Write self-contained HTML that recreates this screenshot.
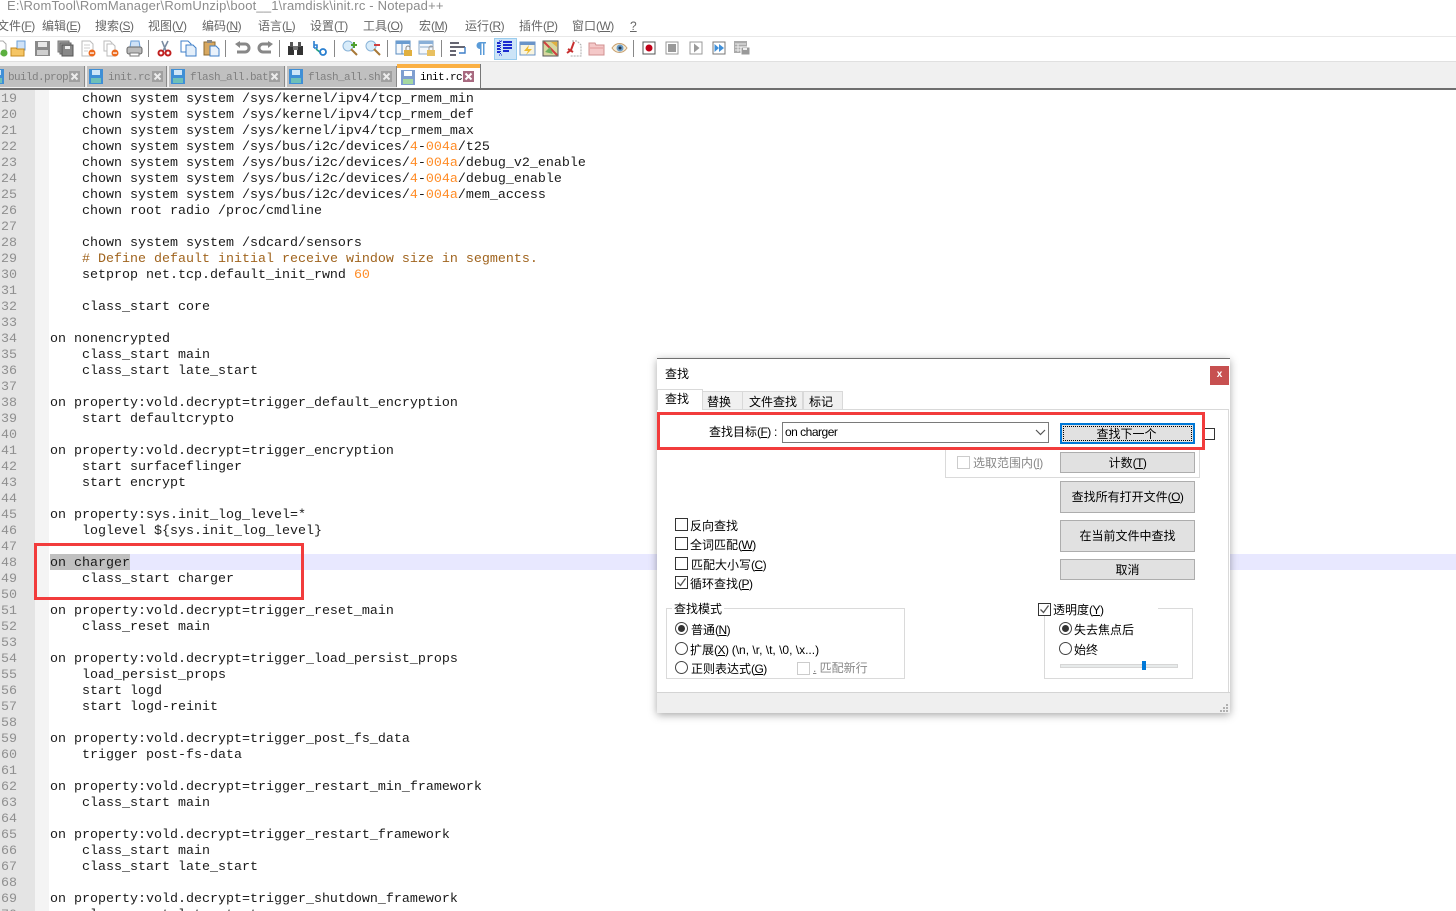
<!DOCTYPE html>
<html><head><meta charset="utf-8"><style>
html,body{margin:0;padding:0;width:1456px;height:911px;overflow:hidden;background:#fff}
body{position:relative;font:12px/16px "Liberation Sans","Noto Sans CJK SC",sans-serif;color:#000}
.a,.t{position:absolute}
.t{white-space:pre;line-height:16px}
em{font-style:normal;letter-spacing:-.55px}
u{text-decoration:underline}
pre{position:absolute;margin:0;font:13.333px/16px "Liberation Mono",monospace;white-space:pre}
#code{left:50px;top:92px;color:#1a1a1a}
#nums{left:1px;top:92px;color:#8f8f8f}
.n{color:#ff8c26}.c{color:#a0641e}
.tab{position:absolute;top:66px;height:21px;background:#c0c0c0;border-right:1px solid #8a8a8a;box-shadow:1px 0 0 #e8e8e8}
.tab b{position:absolute;top:4px;font:400 11px/16px "Liberation Mono",monospace;letter-spacing:-.6px;color:#808080}
.x{position:absolute;top:5px;width:11px;height:11px}
.sep{position:absolute;top:40px;width:1px;height:17px;background:#888}
.ic{position:absolute;top:40px;width:17px;height:17px;overflow:visible}
.btn{position:absolute;left:1060px;width:133px;background:#e1e1e1;border:1px solid #adadad;text-align:center}
.cb{position:absolute;width:11px;height:11px;border:1px solid #333;background:#fff}
.cb.dis{border-color:#ccc}
.r{position:absolute;width:11px;height:11px;border:1px solid #444;border-radius:50%;background:#fff}
.r i{position:absolute;left:2px;top:2px;width:7px;height:7px;border-radius:50%;background:#333}
.gb{position:absolute;border:1px solid #dadada;box-sizing:border-box}
.red{position:absolute;border:3px solid #f23c3c;box-sizing:border-box}
.dt{position:absolute;top:391px;height:18px;background:#f0f0f0;border:1px solid #d9d9d9;border-bottom:0;box-sizing:border-box;line-height:20px}
</style></head><body>
<svg width="0" height="0" style="position:absolute"><defs>
<symbol id="disk" viewBox="0 0 14 15"><rect width="14" height="15" fill="#3f8fd6"/><rect x="3" y="1" width="8" height="5" fill="#cfe6f8"/><rect x="2" y="9" width="10" height="5" fill="#6fc0b8"/></symbol>
<symbol id="diskg" viewBox="0 0 14 15"><rect width="14" height="15" fill="#7f9fd0"/><rect x="3" y="1" width="8" height="5" fill="#fff"/><rect x="2" y="9" width="10" height="5" fill="#a6d8a0"/></symbol>
<symbol id="cl" viewBox="0 0 11 11"><rect width="11" height="11" fill="#a0a0a0"/><path d="M2.500 2.500l6 6M8.500 2.500l-6 6" stroke="#ececec" stroke-width="2"/></symbol>
</defs></svg>

<!-- title -->
<div class="t" style="left:7px;top:-2px;color:#8c8c8c;font-size:13px;letter-spacing:.19px">E:\RomTool\RomManager\RomUnzip\boot__1\ramdisk\init.rc - Notepad++</div>
<div class="a" style="left:0;top:15px;width:1456px;height:21px;background:#fff;border-bottom:1px solid #e8e8e8"></div>
<!-- menu -->
<div style="color:#666">
<span class="t" style="left:-3px;top:18px">文件<em>(<u>F</u>)</em></span>
<span class="t" style="left:42px;top:18px">编辑<em>(<u>E</u>)</em></span>
<span class="t" style="left:95px;top:18px">搜索<em>(<u>S</u>)</em></span>
<span class="t" style="left:148px;top:18px">视图<em>(<u>V</u>)</em></span>
<span class="t" style="left:202px;top:18px">编码<em>(<u>N</u>)</em></span>
<span class="t" style="left:258px;top:18px">语言<em>(<u>L</u>)</em></span>
<span class="t" style="left:310px;top:18px">设置<em>(<u>T</u>)</em></span>
<span class="t" style="left:363px;top:18px">工具<em>(<u>O</u>)</em></span>
<span class="t" style="left:419px;top:18px">宏<em>(<u>M</u>)</em></span>
<span class="t" style="left:465px;top:18px">运行<em>(<u>R</u>)</em></span>
<span class="t" style="left:519px;top:18px">插件<em>(<u>P</u>)</em></span>
<span class="t" style="left:572px;top:18px">窗口<em>(<u>W</u>)</em></span>
<span class="t" style="left:630px;top:18px"><u>?</u></span>
</div>

<!-- toolbar -->
<div class="a" style="left:0;top:61px;width:1456px;height:27px;background:#f0f0f0;border-top:1px solid #e0e0e0"></div>
<div class="a" style="left:494px;top:38px;width:21px;height:20px;background:#cce4f7;border:1px solid #99ccee"></div>
<div class="sep" style="left:148px"></div><div class="sep" style="left:225px"></div><div class="sep" style="left:279px"></div><div class="sep" style="left:334px"></div><div class="sep" style="left:387px"></div><div class="sep" style="left:441px"></div><div class="sep" style="left:633px"></div>

<svg class="ic" style="left:-8px" viewBox="0 0 17 17"><path d="M3 1h8l3 3v10H3z" fill="#fff" stroke="#aaa"/><circle cx="12" cy="13" r="3.500" fill="#5cb040"/></svg>
<svg class="ic" style="left:10px" viewBox="0 0 17 17"><path d="M7 1h8v9H7z" fill="#cfe2f7" stroke="#6a9fd8"/><path d="M1 8h5l1 1h7v7H1z" fill="#f5c565" stroke="#c58a20"/></svg>
<svg class="ic" style="left:34px" viewBox="0 0 17 17"><rect x="1" y="1" width="15" height="15" fill="#8a8a8a"/><rect x="4" y="2" width="9" height="5" fill="#e8e8e8"/><rect x="3" y="10" width="11" height="5" fill="#cfcfcf"/></svg>
<svg class="ic" style="left:57px" viewBox="0 0 17 17"><rect x="1" y="1" width="11" height="11" fill="#aaa" stroke="#777"/><rect x="3" y="3" width="11" height="11" fill="#999" stroke="#666"/><rect x="5" y="5" width="11" height="11" fill="#888" stroke="#555"/><rect x="8" y="6" width="5" height="3" fill="#eee"/></svg>
<svg class="ic" style="left:80px" viewBox="0 0 17 17"><path d="M2 1h8l3 3v12H2z" fill="#fff" stroke="#bbb"/><path d="M4 5h6M4 8h6M4 11h4" stroke="#ccc"/><circle cx="12" cy="13" r="3.500" fill="#ec6a1e"/><rect x="10" y="12.400" width="4" height="1.300" fill="#fff"/></svg>
<svg class="ic" style="left:103px" viewBox="0 0 17 17"><path d="M1 1h6l2 2v8H1z" fill="#fff" stroke="#bbb"/><path d="M4 4h6l2 2v10H4z" fill="#fff" stroke="#bbb"/><circle cx="12" cy="13" r="3.500" fill="#ec6a1e"/><rect x="10" y="12.400" width="4" height="1.300" fill="#fff"/></svg>
<svg class="ic" style="left:126px" viewBox="0 0 17 17"><path d="M5 1h8l1 6H4z" fill="#cfe2f7" stroke="#6a9fd8"/><rect x="1" y="7" width="15" height="7" rx="2" fill="#bbb" stroke="#666"/><rect x="4" y="13" width="9" height="3" fill="#fff" stroke="#777"/></svg>
<svg class="ic" style="left:156px" viewBox="0 0 17 17"><path d="M12 1L7 11M6 1l4 10" stroke="#7a8aa0" stroke-width="1.600"/><circle cx="5" cy="13" r="2.500" fill="none" stroke="#c02020" stroke-width="2"/><circle cx="12" cy="13" r="2.500" fill="none" stroke="#c02020" stroke-width="2"/></svg>
<svg class="ic" style="left:180px" viewBox="0 0 17 17"><path d="M1 1h7l3 3v8H1z" fill="#fff" stroke="#3f7fc8"/><path d="M6 5h7l3 3v8H6z" fill="#e4effa" stroke="#3f7fc8"/></svg>
<svg class="ic" style="left:203px" viewBox="0 0 17 17"><rect x="1" y="2" width="11" height="13" fill="#d8a860" stroke="#8c6a30"/><rect x="4" y="0" width="5" height="3" fill="#888"/><path d="M7 6h6l3 3v7H7z" fill="#eaf2fb" stroke="#3f7fc8"/></svg>
<svg class="ic" style="left:234px" viewBox="0 0 17 17"><path d="M4 4h7a3.500 3.500 0 010 8H3" fill="none" stroke="#888" stroke-width="3"/><path d="M1 4l5-3v7z" fill="#888"/></svg>
<svg class="ic" style="left:257px" viewBox="0 0 17 17"><path d="M13 4H6a3.500 3.500 0 000 8h8" fill="none" stroke="#888" stroke-width="3"/><path d="M16 4l-5-3v7z" fill="#888"/></svg>
<svg class="ic" style="left:287px" viewBox="0 0 17 17"><rect x="1" y="6" width="6" height="9" fill="#333"/><rect x="10" y="6" width="6" height="9" fill="#333"/><rect x="3" y="2" width="3" height="5" fill="#555"/><rect x="11" y="2" width="3" height="5" fill="#555"/><rect x="6" y="6" width="5" height="4" fill="#777"/></svg>
<svg class="ic" style="left:311px" viewBox="0 0 17 17"><path d="M3 1v7M3 5h3v3H3" fill="none" stroke="#2a7fd0" stroke-width="1.600"/><path d="M5 9l5 4" stroke="#20a080" stroke-width="1.600"/><circle cx="12" cy="12" r="3" fill="none" stroke="#2a7fd0" stroke-width="1.800"/></svg>
<svg class="ic" style="left:342px" viewBox="0 0 17 17"><circle cx="6" cy="6" r="5" fill="#d8ecfa" stroke="#8ab4d8"/><path d="M9 9l6 6" stroke="#a87838" stroke-width="2"/><path d="M9 5h6M12 2v6" stroke="#50a030" stroke-width="2"/></svg>
<svg class="ic" style="left:365px" viewBox="0 0 17 17"><circle cx="6" cy="6" r="5" fill="#d8ecfa" stroke="#8ab4d8"/><path d="M9 9l6 6" stroke="#a87838" stroke-width="2"/><path d="M9 5h6" stroke="#d04040" stroke-width="2"/></svg>
<svg class="ic" style="left:396px" viewBox="0 0 17 17"><rect x="0" y="1" width="14" height="13" fill="#f4f8fc" stroke="#5a8cc0"/><rect x="0" y="1" width="14" height="3" fill="#6a9cd0"/><path d="M6 4v10" stroke="#5a8cc0"/><rect x="8" y="10" width="8" height="6" fill="#e0b040"/><path d="M10 10V8a2 2 0 014 0v2" fill="none" stroke="#888"/></svg>
<svg class="ic" style="left:419px" viewBox="0 0 17 17"><rect x="0" y="1" width="14" height="13" fill="#f4f8fc" stroke="#8aa8c8"/><rect x="0" y="1" width="14" height="3" fill="#8ab0d8"/><path d="M1 7h12" stroke="#8aa8c8"/><rect x="8" y="10" width="8" height="6" fill="#e8c060"/><path d="M10 10V8a2 2 0 014 0v2" fill="none" stroke="#999"/></svg>
<svg class="ic" style="left:450px" viewBox="0 0 17 17"><path d="M0 3h9M0 7h15M0 11h6M0 15h6" stroke="#334" stroke-width="1.400"/><path d="M15 7v6H9" fill="none" stroke="#3f7fc8" stroke-width="1.400"/></svg>
<svg class="ic" style="left:472px" viewBox="0 0 17 17"><path d="M7 2h7v1.500h-1.500V15H11V3.500H9.500V15H8V9a3.500 3.500 0 010-7z" fill="#5a9bd8"/></svg>
<svg class="ic" style="left:496px" viewBox="0 0 17 17"><path d="M3 1h3M3 15h3M4.500 1v14" stroke="#1a2ad0" stroke-dasharray="1 1"/><path d="M7 2h9M7 5h9M7 8h9M7 11h6M1 3h3M1 6h3M1 9h3M1 12h3" stroke="#1a2ad0" stroke-width="2"/></svg>
<svg class="ic" style="left:519px" viewBox="0 0 17 17"><rect x="1" y="2" width="15" height="13" fill="#f8f4e0" stroke="#6a94c8"/><rect x="1" y="2" width="15" height="3" fill="#6a94c8"/><path d="M10 5L5 11h4l-2 4 6-6H9z" fill="#eebb30"/></svg>
<svg class="ic" style="left:542px" viewBox="0 0 17 17"><rect x="1" y="1" width="15" height="15" fill="#d8d8a0" stroke="#555"/><path d="M2 2l13 13" stroke="#d04040" stroke-width="2"/><path d="M3 12l5-5 3 7z" fill="#70b060"/><path d="M9 2h6v5z" fill="#e0b040"/></svg>
<svg class="ic" style="left:565px" viewBox="0 0 17 17"><path d="M7 1h5l4 4v11H5" fill="#fff" stroke="#aaa" stroke-dasharray="2 1"/><path d="M9 2L6 10l-4 3M3 9l5 3" fill="none" stroke="#c83030" stroke-width="2"/></svg>
<svg class="ic" style="left:588px" viewBox="0 0 17 17"><path d="M1 3h6l1 2h8v10H1z" fill="#f4c8c8" stroke="#d09090"/><path d="M2 8h13" stroke="#e09898"/></svg>
<svg class="ic" style="left:611px" viewBox="0 0 17 17"><path d="M1 8c4-6 11-6 15 0-4 6-11 6-15 0z" fill="#f4ecd8" stroke="#c8a070"/><circle cx="9" cy="8" r="3.500" fill="#6a9cc8"/><circle cx="9" cy="8" r="1.500" fill="#234"/></svg>
<svg class="ic" style="left:641px" viewBox="0 0 17 17"><rect x="2" y="2" width="12" height="12" fill="#fff" stroke="#555"/><circle cx="8" cy="8" r="3.500" fill="#c00018"/></svg>
<svg class="ic" style="left:664px" viewBox="0 0 17 17"><rect x="2" y="2" width="12" height="12" fill="#fff" stroke="#999"/><rect x="4" y="4" width="8" height="8" fill="#999"/></svg>
<svg class="ic" style="left:688px" viewBox="0 0 17 17"><rect x="2" y="2" width="12" height="12" fill="#fff" stroke="#999"/><path d="M6 3.500L11.500 8 6 12.500z" fill="#999"/></svg>
<svg class="ic" style="left:711px" viewBox="0 0 17 17"><rect x="2" y="2" width="12" height="12" fill="#fff" stroke="#777"/><path d="M3.500 4L8 8l-4.500 4zM8 4l5 4-5 4z" fill="#3f8fd8"/></svg>
<svg class="ic" style="left:734px" viewBox="0 0 17 17"><rect x="0" y="1" width="13" height="12" fill="#aaa"/><path d="M1 4h11M1 7h6M1 10h6M4 4v8" stroke="#eee"/><rect x="7" y="7" width="9" height="8" fill="#999" stroke="#fff"/><rect x="9" y="8" width="4" height="2" fill="#eee"/></svg>

<!-- tabs -->
<div class="tab" style="left:-4px;width:88px"><svg style="position:absolute;left:-6px;top:3px" width="14" height="15"><use href="#disk"/></svg><b style="left:12px">build.prop</b><svg class="x" style="left:73px"><use href="#cl"/></svg></div>
<div class="tab" style="left:87px;width:79px"><svg style="position:absolute;left:2px;top:3px" width="14" height="15"><use href="#disk"/></svg><b style="left:21px">init.rc</b><svg class="x" style="left:65px"><use href="#cl"/></svg></div>
<div class="tab" style="left:169px;width:115px"><svg style="position:absolute;left:2px;top:3px" width="14" height="15"><use href="#disk"/></svg><b style="left:21px">flash_all.bat</b><svg class="x" style="left:100px"><use href="#cl"/></svg></div>
<div class="tab" style="left:287px;width:109px"><svg style="position:absolute;left:2px;top:3px" width="14" height="15"><use href="#disk"/></svg><b style="left:21px">flash_all.sh</b><svg class="x" style="left:94px"><use href="#cl"/></svg></div>
<div class="a" style="left:397px;top:64px;width:83px;height:24px;background:#fff;border-right:1px solid #777"><div class="a" style="left:0;top:0;width:83px;height:4px;background:#fab044"></div><svg style="position:absolute;left:4px;top:6px" width="14" height="15"><use href="#diskg"/></svg><b style="position:absolute;left:23px;top:6px;font:400 11px/16px 'Liberation Mono',monospace;letter-spacing:-.6px;color:#000">init.rc</b><svg style="position:absolute;left:66px;top:7px" width="11" height="11" viewBox="0 0 11 11"><rect width="11" height="11" fill="#a86a80"/><path d="M2.500 2.500l6 6M8.500 2.500l-6 6" stroke="#fff" stroke-width="2"/></svg></div>
<div class="a" style="left:0;top:88px;width:1456px;height:2px;background:#6e6e6e"></div>

<!-- editor -->
<div class="a" style="left:0;top:90px;width:35px;height:821px;background:#e4e4e4"></div>
<div class="a" style="left:35px;top:90px;width:14px;height:821px;background:#f4f4f4"></div>
<div class="a" style="left:50px;top:554px;width:1406px;height:16px;background:#e8e8ff"></div>
<div class="a" style="left:50px;top:554px;width:80px;height:16px;background:#c0c0c0"></div>
<pre id="nums">19
20
21
22
23
24
25
26
27
28
29
30
31
32
33
34
35
36
37
38
39
40
41
42
43
44
45
46
47
48
49
50
51
52
53
54
55
56
57
58
59
60
61
62
63
64
65
66
67
68
69
70</pre>
<pre id="code">    chown system system /sys/kernel/ipv4/tcp_rmem_min
    chown system system /sys/kernel/ipv4/tcp_rmem_def
    chown system system /sys/kernel/ipv4/tcp_rmem_max
    chown system system /sys/bus/i2c/devices/<span class="n">4</span>-<span class="n">004a</span>/t25
    chown system system /sys/bus/i2c/devices/<span class="n">4</span>-<span class="n">004a</span>/debug_v2_enable
    chown system system /sys/bus/i2c/devices/<span class="n">4</span>-<span class="n">004a</span>/debug_enable
    chown system system /sys/bus/i2c/devices/<span class="n">4</span>-<span class="n">004a</span>/mem_access
    chown root radio /proc/cmdline

    chown system system /sdcard/sensors
    <span class="c"># Define default initial receive window size in segments.</span>
    setprop net.tcp.default_init_rwnd <span class="n">60</span>

    class_start core

on nonencrypted
    class_start main
    class_start late_start

on property:vold.decrypt=trigger_default_encryption
    start defaultcrypto

on property:vold.decrypt=trigger_encryption
    start surfaceflinger
    start encrypt

on property:sys.init_log_level=*
    loglevel ${sys.init_log_level}

on charger
    class_start charger

on property:vold.decrypt=trigger_reset_main
    class_reset main

on property:vold.decrypt=trigger_load_persist_props
    load_persist_props
    start logd
    start logd-reinit

on property:vold.decrypt=trigger_post_fs_data
    trigger post-fs-data

on property:vold.decrypt=trigger_restart_min_framework
    class_start main

on property:vold.decrypt=trigger_restart_framework
    class_start main
    class_start late_start

on property:vold.decrypt=trigger_shutdown_framework
    class_reset late_start</pre>
<div class="red" style="left:34px;top:543px;width:270px;height:57px"></div>

<!-- dialog -->
<div class="a" style="left:657px;top:358px;width:573px;height:355px;background:#fff;border-top:1px solid #707070;box-sizing:border-box;box-shadow:0 2px 8px rgba(0,0,0,.35)"></div>
<div class="a" style="left:657px;top:692px;width:573px;height:21px;background:#efefef;border-top:1px solid #d4d4d4;box-sizing:border-box"></div>
<div class="a" style="left:1228px;top:409px;width:1px;height:283px;background:#d9d9d9"></div>
<div class="a" style="left:657px;top:409px;width:572px;height:1px;background:#d9d9d9"></div>
<svg class="a" style="left:1219px;top:703px" width="10" height="9"><path d="M7 1h2v2H7zM4 4h2v2H4zM7 4h2v2H7zM1 7h2v2H1zM4 7h2v2H4zM7 7h2v2H7z" fill="#b0b0b0"/></svg>
<span class="t" style="left:665px;top:366px">查找</span>
<div class="a" style="left:1210px;top:366px;width:19px;height:19px;background:#c75050;color:#fff;text-align:center;font:700 10px/18px 'Liberation Sans',sans-serif">x</div>
<div class="a" style="left:657px;top:389px;width:46px;height:21px;background:#fff;border:1px solid #d9d9d9;border-bottom:0;box-sizing:border-box;line-height:19px;padding-left:7px">查找</div>
<div class="dt" style="left:702px;width:41px;padding-left:4px">替换</div>
<div class="dt" style="left:742px;width:61px;padding-left:6px">文件查找</div>
<div class="dt" style="left:803px;width:40px;padding-left:5px">标记</div>

<span class="t" style="left:709px;top:424px">查找目标<em>(<u>F</u>)</em> :</span>
<div class="a" style="left:782px;top:422px;height:19px;border:1px solid #7a7a7a;background:#fff;line-height:19px;padding-left:2px;width:263px;letter-spacing:-.5px">on charger</div>
<svg class="a" style="left:1035px;top:429px" width="11" height="7"><path d="M1 1l4.500 4.500L10 1" fill="none" stroke="#555" stroke-width="1.200"/></svg>
<div class="a" style="left:1060px;top:423px;width:131px;height:17px;background:#e1e1e1;border:2px solid #0078d7;text-align:center;line-height:19px"><div class="a" style="left:0;top:0;width:127px;height:13px;margin:1px;border:1px dotted #000"></div><span style="position:relative;left:-1px">查找下一个</span></div>
<div class="a" style="left:1204px;top:428px;width:9px;height:10px;border:1px solid #333;background:#fff"></div>

<div class="gb" style="left:945px;top:449px;width:255px;height:29px;border-top:0"></div>
<div class="cb dis" style="left:957px;top:456px"></div>
<span class="t" style="left:973px;top:455px;color:#888">选取范围内<em>(<u>I</u>)</em></span>
<div class="btn" style="top:452px;height:19px;line-height:21px">计数<em>(<u>T</u>)</em></div>
<div class="btn" style="top:481px;height:30px;line-height:31px">查找所有打开文件<em>(<u>O</u>)</em></div>
<div class="btn" style="top:520px;height:30px;line-height:31px">在当前文件中查找</div>
<div class="btn" style="top:559px;height:19px;line-height:21px">取消</div>

<div class="red" style="left:657px;top:412px;width:548px;height:38px"></div>

<div class="cb" style="left:675px;top:518px"></div><span class="t" style="left:690px;top:518px">反向查找</span>
<div class="cb" style="left:675px;top:537px"></div><span class="t" style="left:690px;top:537px">全词匹配<em>(<u>W</u>)</em></span>
<div class="cb" style="left:675px;top:557px"></div><span class="t" style="left:691px;top:557px">匹配大小写<em>(<u>C</u>)</em></span>
<div class="cb" style="left:675px;top:576px"><svg width="11" height="11" style="display:block"><path d="M1.500 5.500l3 3 5-7" fill="none" stroke="#555" stroke-width="1.300"/></svg></div><span class="t" style="left:690px;top:576px">循环查找<em>(<u>P</u>)</em></span>

<div class="gb" style="left:666px;top:608px;width:239px;height:71px"></div>
<span class="t" style="left:672px;top:601px;background:#fff;padding:0 2px">查找模式</span>
<div class="r" style="left:675px;top:622px"><i></i></div><span class="t" style="left:691px;top:622px">普通<em>(<u>N</u>)</em></span>
<div class="r" style="left:675px;top:642px"></div><span class="t" style="left:690px;top:642px">扩展<em>(<u>X</u>)</em> (\n, \r, \t, \0, \x...)</span>
<div class="r" style="left:675px;top:661px"></div><span class="t" style="left:691px;top:661px">正则表达式<em>(<u>G</u>)</em></span>
<div class="cb dis" style="left:797px;top:662px"></div><span class="t" style="left:813px;top:660px;color:#888"><u>.</u> 匹配新行</span>

<div class="gb" style="left:1044px;top:608px;width:149px;height:71px"></div>
<div class="a" style="left:1036px;top:600px;width:122px;height:16px;background:#fff"></div>
<div class="cb" style="left:1038px;top:603px"><svg width="11" height="11" style="display:block"><path d="M1.500 5.500l3 3 5-7" fill="none" stroke="#555" stroke-width="1.300"/></svg></div><span class="t" style="left:1053px;top:602px">透明度<em>(<u>Y</u>)</em></span>
<div class="r" style="left:1059px;top:622px"><i></i></div><span class="t" style="left:1074px;top:622px">失去焦点后</span>
<div class="r" style="left:1059px;top:642px"></div><span class="t" style="left:1074px;top:642px">始终</span>
<div class="a" style="left:1060px;top:664px;width:116px;height:2px;background:#e7eaea;border:1px solid #d6d6d6"></div>
<div class="a" style="left:1142px;top:661px;width:4px;height:9px;background:#0078d7"></div>
</body></html>
